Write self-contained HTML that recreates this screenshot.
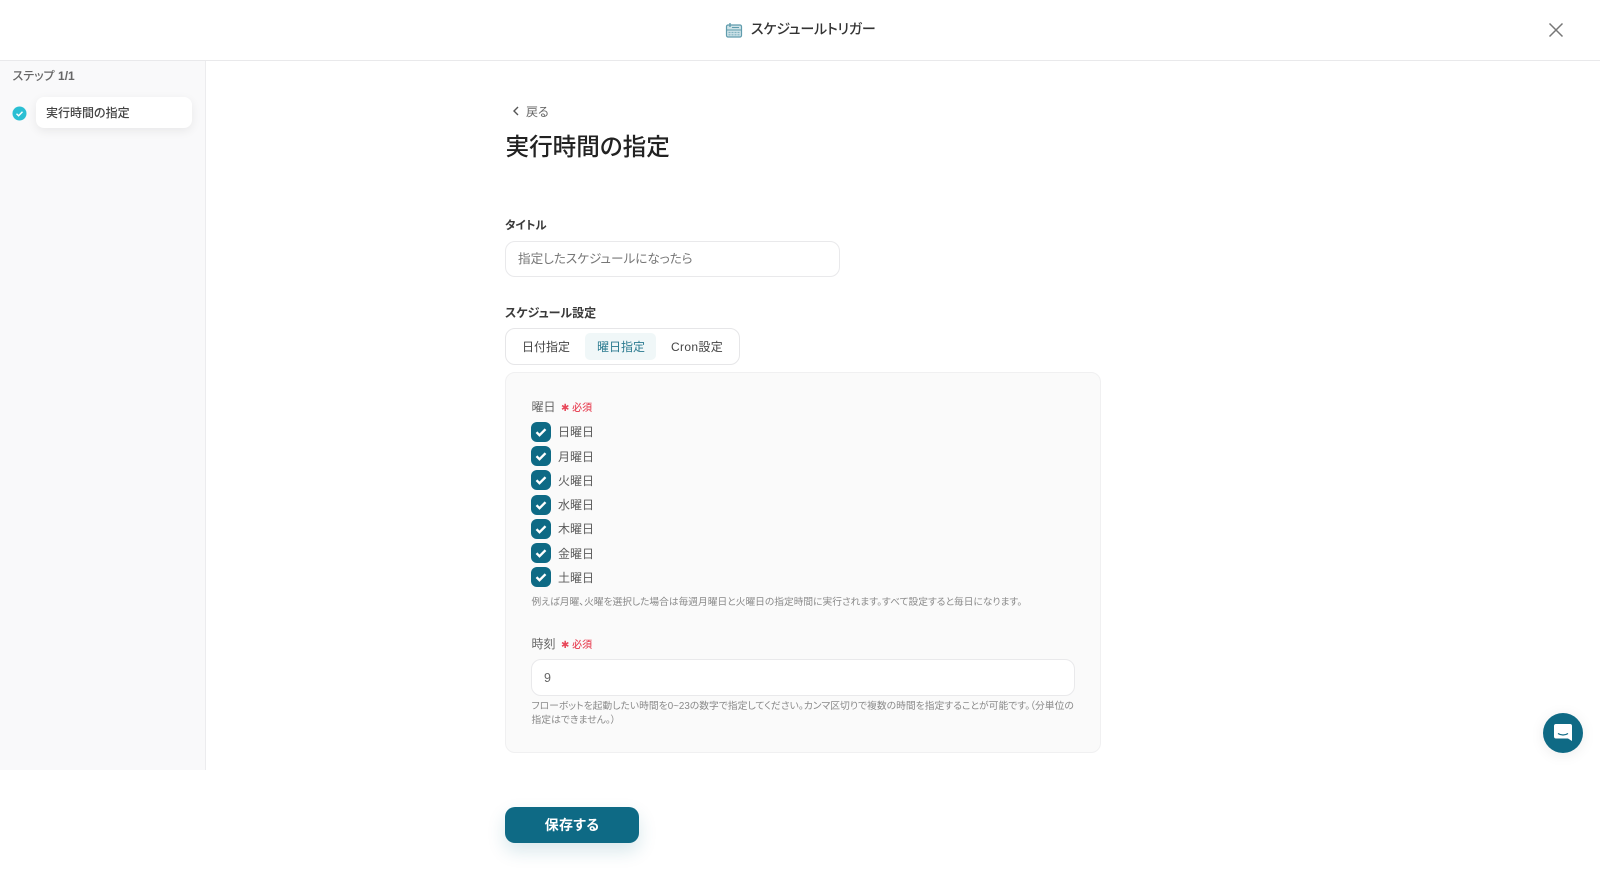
<!DOCTYPE html>
<html lang="ja">
<head>
<meta charset="utf-8">
<title>スケジュールトリガー</title>
<style>
html,body{margin:0;padding:0;background:#fff}
body{width:1600px;height:886px;position:relative;overflow:hidden;font-family:"Liberation Sans","Noto Sans CJK JP",sans-serif;color:#333;font-feature-settings:"palt";filter:blur(.3px)}
.a{position:absolute;white-space:nowrap;line-height:1}
.box{position:absolute;box-sizing:border-box}
.cb{position:absolute;left:531px;width:20px;height:20px;border-radius:6px;background:#0e6a85}
.cb svg{position:absolute;left:0;top:0}
.day{font-size:12px;color:#5c5c5c;left:558px}
.help{font-size:9.800px;color:#8a8a8a;left:531.500px}
.req{font-size:10px;color:#e8485a;left:561px;font-weight:500}
</style>
</head>
<body>
<!-- header -->
<div class="box" style="left:0;top:60px;width:1600px;height:1px;background:#e9e9eb"></div>
<svg class="a" style="left:725px;top:21px" width="18" height="18" viewBox="0 0 18 18"><rect x="1.500" y="4" width="15" height="12" rx="1.500" fill="#cfe3e8" stroke="#5f9cad" stroke-width="1.200"/><path d="M1.500 9h15" stroke="#5f9cad" stroke-width="1"/><path d="M5 2v4" stroke="#5f9cad" stroke-width="1.400"/><path d="M7 6.500h7" stroke="#5f9cad" stroke-width="1"/><path d="M3.500 11.500h11M3.500 13.800h11" stroke="#7fb2c0" stroke-width="1.200" stroke-dasharray="2 1"/></svg>
<div class="a" style="left:751px;top:22px;font-size:14px;font-weight:500;color:#333;letter-spacing:-.2px">スケジュールトリガー</div>
<svg class="a" style="left:1547px;top:21px" width="18" height="18" viewBox="0 0 18 18"><path d="M2.500 2.500l13 13M15.500 2.500l-13 13" stroke="#777" stroke-width="1.500" fill="none"/></svg>

<!-- sidebar -->
<div class="box" style="left:0;top:61px;width:206px;height:709px;background:#f9f9fa;border-right:1px solid #ececee"></div>
<div class="a" style="left:12.500px;top:70px;font-size:12px;font-weight:500;color:#666">ステップ <span style="font-weight:700">1/1</span></div>
<svg class="a" style="left:12px;top:105.500px" width="15" height="15" viewBox="0 0 15 15"><circle cx="7.500" cy="7.500" r="7" fill="#2bbfd3"/><path d="M4.500 7.700l2.100 2.100 3.900-4" stroke="#fff" stroke-width="1.400" fill="none"/></svg>
<div class="box" style="left:36px;top:97px;width:156px;height:31px;background:#fff;border-radius:8px;box-shadow:0 3px 10px rgba(0,0,0,.07)"></div>
<div class="a" style="left:46px;top:107px;font-size:12px;font-weight:500;color:#444">実行時間の指定</div>

<!-- heading -->
<svg class="a" style="left:510px;top:105px" width="12" height="12" viewBox="0 0 12 12"><path d="M8 2L4 6l4 4" stroke="#555" stroke-width="1.400" fill="none"/></svg>
<div class="a" style="left:526px;top:105.500px;font-size:12px;color:#666">戻る</div>
<div class="a" style="left:505.500px;top:137px;font-size:23.600px;font-weight:500;color:#222">実行時間の指定</div>

<!-- title -->
<div class="a" style="left:505px;top:221px;font-size:11.500px;font-weight:700;color:#3a3a3a">タイトル</div>
<div class="box" style="left:505px;top:241px;width:335px;height:36px;background:#fff;border:1.500px solid #e9e9eb;border-radius:10px"></div>
<div class="a" style="left:518px;top:253px;font-size:12.600px;color:#777">指定したスケジュールになったら</div>

<!-- schedule -->
<div class="a" style="left:505px;top:307px;font-size:12px;font-weight:700;color:#3a3a3a">スケジュール設定</div>
<div class="box" style="left:505px;top:328px;width:235px;height:37px;background:#fff;border:1.500px solid #e6e6e8;border-radius:10px"></div>
<div class="box" style="left:585px;top:333px;width:71px;height:27px;background:#f0f7f8;border-radius:5px"></div>
<div class="a" style="left:522px;top:341px;font-size:12px;color:#444">日付指定</div>
<div class="a" style="left:597px;top:341px;font-size:12px;color:#2a7a8f">曜日指定</div>
<div class="a" style="left:671px;top:341px;font-size:12px;color:#444;letter-spacing:.35px">Cron設定</div>

<!-- panel -->
<div class="box" style="left:505px;top:372px;width:596px;height:381px;background:#fafafa;border:1px solid #f0f0f1;border-radius:10px"></div>
<div class="a" style="left:531.500px;top:400.500px;font-size:12px;color:#666">曜日</div>
<div class="a req" style="top:404px">✱ 必須</div>

<div class="cb" style="top:422px"><svg width="20" height="20" viewBox="0 0 20 20"><path d="M5.500 10.200l3 3 6-6" stroke="#fff" stroke-width="2.400" fill="none"/></svg></div>
<div class="a day" style="top:426px">日曜日</div>
<div class="cb" style="top:446px"><svg width="20" height="20" viewBox="0 0 20 20"><path d="M5.500 10.200l3 3 6-6" stroke="#fff" stroke-width="2.400" fill="none"/></svg></div>
<div class="a day" style="top:450.500px">月曜日</div>
<div class="cb" style="top:470px"><svg width="20" height="20" viewBox="0 0 20 20"><path d="M5.500 10.200l3 3 6-6" stroke="#fff" stroke-width="2.400" fill="none"/></svg></div>
<div class="a day" style="top:474.500px">火曜日</div>
<div class="cb" style="top:495px"><svg width="20" height="20" viewBox="0 0 20 20"><path d="M5.500 10.200l3 3 6-6" stroke="#fff" stroke-width="2.400" fill="none"/></svg></div>
<div class="a day" style="top:499px">水曜日</div>
<div class="cb" style="top:519px"><svg width="20" height="20" viewBox="0 0 20 20"><path d="M5.500 10.200l3 3 6-6" stroke="#fff" stroke-width="2.400" fill="none"/></svg></div>
<div class="a day" style="top:523px">木曜日</div>
<div class="cb" style="top:543px"><svg width="20" height="20" viewBox="0 0 20 20"><path d="M5.500 10.200l3 3 6-6" stroke="#fff" stroke-width="2.400" fill="none"/></svg></div>
<div class="a day" style="top:547.500px">金曜日</div>
<div class="cb" style="top:567px"><svg width="20" height="20" viewBox="0 0 20 20"><path d="M5.500 10.200l3 3 6-6" stroke="#fff" stroke-width="2.400" fill="none"/></svg></div>
<div class="a day" style="top:571.500px">土曜日</div>

<div class="a help" style="top:597.500px;font-size:9.720px">例えば月曜、火曜を選択した場合は毎週月曜日と火曜日の指定時間に実行されます。すべて設定すると毎日になります。</div>

<div class="a" style="left:531.500px;top:638px;font-size:12px;color:#666">時刻</div>
<div class="a req" style="top:641px">✱ 必須</div>
<div class="box" style="left:531px;top:659px;width:544px;height:37px;background:#fff;border:1.500px solid #e9e9eb;border-radius:10px"></div>
<div class="a" style="left:544px;top:671.500px;font-size:12.500px;color:#666">9</div>
<div class="a help" style="top:700.500px;margin-top:1.500px">フローボットを起動したい時間を0~23の数字で指定してください。カンマ区切りで複数の時間を指定することが可能です。（分単位の</div>
<div class="a help" style="top:716px">指定はできません。）</div>

<!-- save -->
<div class="box" style="left:505px;top:807px;width:134px;height:36px;background:#0e6a85;border-radius:10px;box-shadow:0 8px 18px rgba(14,106,133,.16)"></div>
<div class="a" style="left:505px;width:134px;text-align:center;top:818px;font-size:14px;font-weight:700;color:#fff;letter-spacing:.3px">保存する</div>

<!-- chat -->
<div class="box" style="left:1543px;top:713px;width:40px;height:40px;border-radius:50%;background:#0f6a85;box-shadow:0 2px 14px rgba(0,0,0,.08)"></div>
<svg class="a" style="left:1553px;top:723px" width="20" height="20" viewBox="0 0 20 20"><path d="M3 1h14a2 2 0 0 1 2 2v15l-4-2.500H3a2 2 0 0 1-2-2V3a2 2 0 0 1 2-2z" fill="#fff"/><path d="M5 10.500c3 2 7 2 10 0" stroke="#0f6a85" stroke-width="1.200" fill="none"/></svg>
</body>
</html>
